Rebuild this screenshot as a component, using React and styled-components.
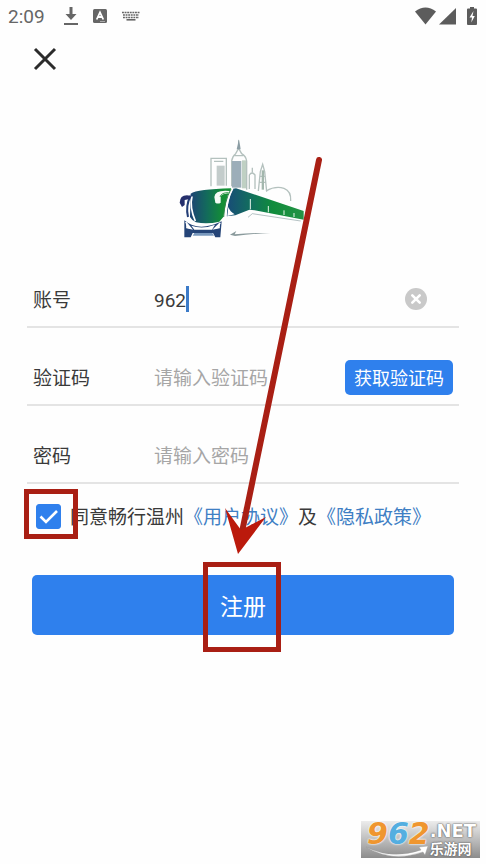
import { useState } from "react";
import styled, { createGlobalStyle } from "styled-components";

const azul = "#2f80ed";
const vermelho = "#a91f14";
const cinza = "#666666";

export default function App() {
  const [account, setAccount] = useState("962");
  const [agree, setAgree] = useState(true);

  return (
    <Page lang="zh-CN">
      <GlobalStyle />
      <StatusBar>
        <Clock>2:09</Clock>
        <DownloadIcon />
        <LetterIcon />
        <KeyboardIcon />
        <Signals>
          <WifiIcon />
          <CellIcon />
          <BatteryIcon />
        </Signals>
      </StatusBar>
      <Header>
        <CloseButton type="button" aria-label="关闭">
          <svg width="24" height="24" viewBox="0 0 24 24">
            <path d="M2 2 22 22M22 2 2 22" stroke="#2b2b2b" strokeWidth="3" fill="none" />
          </svg>
        </CloseButton>
      </Header>
      <Main>
        <BusLogo />
        <Form onSubmit={(e) => e.preventDefault()}>
          <Row>
            <Label htmlFor="account">账号</Label>
            <AccountInput
              id="account"
              value={account}
              onChange={(e) => setAccount(e.target.value)}
            />
            <Cursor />
            <ClearButton type="button" aria-label="清除" onClick={() => setAccount("")}>
              <svg width="22" height="22" viewBox="0 0 22 22">
                <circle cx="11" cy="11" r="11" fill="#c9c9c9" />
                <path
                  d="M7.3 7.3l7.4 7.4M14.7 7.3l-7.4 7.4"
                  stroke="#fff"
                  strokeWidth="2.6"
                  strokeLinecap="round"
                />
              </svg>
            </ClearButton>
          </Row>
          <Row>
            <Label htmlFor="code">验证码</Label>
            <Input id="code" placeholder="请输入验证码" />
            <CodeButton type="button">获取验证码</CodeButton>
          </Row>
          <Row>
            <Label htmlFor="password">密码</Label>
            <Input id="password" type="password" placeholder="请输入密码" />
          </Row>
          <Agreement>
            <CheckBox>
              <input
                id="agree"
                type="checkbox"
                checked={agree}
                onChange={(e) => setAgree(e.target.checked)}
              />
              {agree && (
                <svg width="25" height="25" viewBox="0 0 25 25">
                  <path d="M4.5 12.5l5.5 5.5L21 7" stroke="#fff" strokeWidth="2.6" fill="none" />
                </svg>
              )}
              <CheckFrame />
            </CheckBox>
            <AgreeText>
              <label htmlFor="agree">同意畅行温州</label>
              <a href="#protocol">《用户协议》</a>及<a href="#privacy">《隐私政策》</a>
            </AgreeText>
          </Agreement>
          <SubmitButton type="submit">
            注册
            <SubmitFrame />
          </SubmitButton>
        </Form>
      </Main>
      <Arrow width="100" height="404" viewBox="0 0 100 404">
        <path d="M97 4 20 376" stroke={vermelho} strokeWidth="6" strokeLinecap="round" />
        <path d="M3 352 19 374 44 361 16 398Z" fill="#bb1a0c" />
      </Arrow>
      <Watermark>
        <Digits>
          9<em>6</em>2
        </Digits>
        <SiteName>
          <b>.NET</b>
          <span>乐游网</span>
        </SiteName>
        <Swoosh width="62" height="12" viewBox="0 0 62 12">
          <path d="M0 1Q26 14 55 4L53 1 62 0 59 9 57 6Q26 17 0 1Z" fill="#fff" stroke="#999" strokeWidth=".4" />
        </Swoosh>
      </Watermark>
    </Page>
  );
}

function DownloadIcon() {
  return (
    <svg width="14" height="20" viewBox="0 0 14 20">
      <path d="M5.5 1h3v7h4L7 14 1.5 8h4zM0 17h14v2H0z" fill={cinza} />
    </svg>
  );
}

function LetterIcon() {
  return (
    <svg width="14" height="16" viewBox="0 0 14 16">
      <rect y="1" width="14" height="14" rx="1.5" fill={cinza} />
      <path d="M3.7 11.5 7 4.3l3.3 7.2M5 9h4" stroke="#fff" strokeWidth="1.8" fill="none" />
      <path d="M7 13.5h5" stroke="#aaa" strokeWidth="1" />
    </svg>
  );
}

function KeyboardIcon() {
  return (
    <svg width="18" height="10" viewBox="0 0 18 10">
      <path
        d="M0 1.5h18M1 4h16M1 6.5h16"
        stroke={cinza}
        strokeWidth="1.7"
        strokeDasharray="1.9 .7"
      />
      <path d="M4.5 8.8h9" stroke={cinza} strokeWidth="1.6" />
    </svg>
  );
}

function WifiIcon() {
  return (
    <svg width="21" height="18" viewBox="0 0 21 18">
      <path d="M0 4.500Q10.500-3.500 21 4.500L10.500 17.500Z" fill="#5c5c5c" />
    </svg>
  );
}

function CellIcon() {
  return (
    <svg width="17" height="18" viewBox="0 0 17 18">
      <path d="M17 1v16.500H0z" fill="#5c5c5c" />
    </svg>
  );
}

function BatteryIcon() {
  return (
    <svg width="10" height="18" viewBox="0 0 10 18">
      <path d="M3 0h4v1.500h2a1 1 0 0 1 1 1V17a1 1 0 0 1-1 1H1a1 1 0 0 1-1-1V2.500a1 1 0 0 1 1-1h2z" fill="#5c5c5c" />
      <path d="M6.500 4 2.500 10.500H5L4.300 15.500 7.800 9H5.500z" fill="#fff" />
    </svg>
  );
}

function BusLogo() {
  return (
    <Logo width="130" height="102" viewBox="42 25 390 306" role="img" aria-label="畅行温州">
      <defs>
        <linearGradient id="front">
          <stop offset="0" stopColor="#1c4275" />
          <stop offset=".4" stopColor="#136a5c" />
          <stop offset=".8" stopColor="#138f35" />
        </linearGradient>
        <linearGradient id="side">
          <stop offset="0" stopColor="#184b78" />
          <stop offset=".35" stopColor="#11735a" />
          <stop offset=".6" stopColor="#108c3c" />
          <stop offset="1" stopColor="#249344" />
        </linearGradient>
      </defs>
      {/* skyline */}
      <g fill="none" stroke="#b4c1be" strokeWidth="4">
        <path d="M141 170V86h46v82M150 95h28" />
        <path d="M203 170V94q2-14 12-22l9-16 9 16q13 8 15 22v86M212 78h26M224 32v26" />
        <path d="M256 178v-42q8-12 17 0v42M265 114v14" />
        <path d="M283 184l6-58 7-22 6 22 6 60M288 140h16M286 158h20" />
        <path d="M306 184q28-16 54-8 22 8 20 38" />
      </g>
      <path d="M158 108h24v60h-24z" fill="#c3cccb" />
      <path d="M204 94h28v80h-28z" fill="#9caeb9" />
      <path d="M234 92h12v84h-12z" fill="#bfd0c3" />
      <path d="M293 122h7v58h-7z" fill="#a3b7ad" />
      <path d="M221 46l3-17 4 17 2 13h-12z" fill="#8b9da4" />
      {/* body */}
      <path d="M80 192Q100 179 202 176L190 200 178 262 166 276Q130 284 96 278 82 270 78 262Z" fill="url(#front)" />
      <path d="M207 177 216 176 419 244 419 270 272 242 256 240 214 257 188 260Q191 206 207 177Z" fill="url(#side)" />
      <path d="M206 176Q187 209 184 264" fill="none" stroke="#fff" strokeWidth="6" />
      <path d="M201 178Q181 215 179 262" fill="none" stroke="#31864c" strokeWidth="3" />
      <path d="M84 200Q76 232 94 274" fill="none" stroke="#fff" strokeWidth="5" />
      <path d="M80 198Q64 228 72 262" fill="none" stroke="#233e76" strokeWidth="6" />
      <path d="M79 198Q48 192 47 219L54 232 62 226 62 211 78 208Z" fill="#252f6c" />
      <path d="M196 184Q153 180 151 202L154 219Q162 224 170 219L170 200Q174 193 194 191Z" fill="#f6fbf6" />
      <path d="M194 189Q172 188 168 202" fill="none" stroke="#3c9d54" strokeWidth="3" />
      <path d="M193 232Q198 246 212 254L190 259Z" fill="#fff" />
      <path d="M259 208v31M313 229v19M360 242v14M390 250v12" fill="none" stroke="#e8f5ea" strokeWidth="3" />
      <path d="M252 263 265 252 410 274" fill="none" stroke="#8fa3a6" strokeWidth="2" />
      {/* bumper */}
      <path d="M61 272Q103 309 173 275L169 323H154L147 310H86L80 323H61Z" fill="#244477" />
      <path d="M65 277 82 297 67 294M169 279 151 297 167 294" fill="#fff" stroke="#fff" strokeWidth="4" />
      <path d="M82 288Q116 300 153 285L144 300H91Z" fill="#fff" />
      <path d="M91 310H145L150 318H86Z" fill="#7898bd" />
      <path d="M198 315 217 304 212 314Q263 308 319 311 265 311 213 319Z" fill="#8a9a9c" />
    </Logo>
  );
}

const GlobalStyle = createGlobalStyle`
  * {
    box-sizing: border-box;
  }
  body {
    margin: 0;
    background-color: #fefefe;
  }
  button, input {
    font-family: inherit;
    border: 0;
    padding: 0;
    margin: 0;
    background-color: transparent;
  }
  button {
    cursor: pointer;
  }
  svg {
    display: block;
    flex-shrink: 0;
  }
`;

const Page = styled.div`
  position: relative;
  min-height: 100vh;
  overflow: hidden;
  font-family: Roboto, "Noto Sans CJK SC", sans-serif;
  font-size: 19px;
  font-weight: 400;
  line-height: 28px;
  color: #3a3a3a;
`;

const StatusBar = styled.div`
  display: flex;
  align-items: center;
  height: 32px;
  padding: 0 9px 0 8px;
  gap: 15px;
`;

const Clock = styled.span`
  margin-right: 4px;
  padding-top: 2px;
  color: ${cinza};
`;

const Signals = styled.div`
  display: flex;
  align-items: center;
  gap: 3px;
  margin-left: auto;
  svg:last-child {
    margin-left: 8px;
  }
`;

const Header = styled.header`
  display: flex;
  align-items: center;
  height: 54px;
  padding: 0 33px;
`;

const CloseButton = styled.button`
  display: flex;
`;

const Main = styled.main`
  padding: 52px 27px 0;
`;

const Logo = styled.svg`
  margin: 0 auto 32px;
`;

const Form = styled.form`
  display: flex;
  flex-direction: column;
`;

const Row = styled.div`
  display: flex;
  align-items: center;
  height: 56px;
  margin-bottom: 22px;
  padding: 0 6px;
  border-bottom: 2px solid #e4e4e4;
  &:nth-child(3) {
    margin-bottom: 0;
  }
`;

const Label = styled.label`
  flex: 0 0 121px;
  padding-top: 4px;
`;

const Input = styled.input`
  flex: 1;
  min-width: 0;
  padding-top: 4px;
  font-size: 19px;
  line-height: 28px;
  color: #3a3a3a;
  outline: none;
  &::placeholder {
    color: #a6a6a6;
    opacity: 1;
  }
`;

const AccountInput = styled(Input)`
  flex: 0 1 auto;
  field-sizing: content;
`;

const Cursor = styled.span`
  width: 3px;
  height: 26px;
  background-color: #3c7bc8;
`;

const ClearButton = styled.button`
  display: flex;
  margin-left: auto;
  margin-right: 26px;
`;

const CodeButton = styled.button`
  width: 108px;
  height: 35px;
  border-radius: 5px;
  font-size: 18px;
  color: #fff;
  background-color: ${azul};
`;

const Agreement = styled.div`
  display: flex;
  align-items: center;
  height: 64px;
  padding-left: 9px;
`;

const CheckBox = styled.span`
  position: relative;
  display: flex;
  margin-right: 9px;
  input {
    appearance: none;
    width: 25px;
    height: 25px;
    border: 1px solid ${azul};
    border-radius: 3px;
  }
  input:checked {
    background-color: ${azul};
  }
  svg {
    position: absolute;
    inset: 0;
    pointer-events: none;
  }
`;

/* red marks drawn over the controls */
const Frame = styled.span`
  position: absolute;
  border: 5px solid ${vermelho};
  pointer-events: none;
`;

const CheckFrame = styled(Frame)`
  inset: -15px -17px -10px -12px;
`;

const SubmitFrame = styled(Frame)`
  top: -13px;
  bottom: -17px;
  left: 50%;
  width: 78px;
  margin-left: -40px;
`;

const AgreeText = styled.div`
  padding-top: 4px;
  white-space: nowrap;
  a {
    color: #3f7fc4;
    text-decoration: none;
  }
`;

const SubmitButton = styled.button`
  position: relative;
  height: 60px;
  margin: 27px 5px 0;
  border-radius: 5px;
  font-size: 23px;
  color: #fff;
  background-color: ${azul};
`;

const Arrow = styled.svg`
  position: absolute;
  top: 156px;
  left: calc(50% - 21px);
  pointer-events: none;
`;

const Watermark = styled.div`
  position: absolute;
  right: 6px;
  bottom: 6px;
  display: flex;
  width: 119px;
  height: 37px;
  padding-left: 6px;
  background-image: linear-gradient(#ececec, #b4b4b4 60%, #8c8c8c);
`;

const Digits = styled.strong`
  font: italic bold 30px/26px "DejaVu Sans", sans-serif;
  color: #ef962f;
  text-shadow: 0 0 2px #fff, 0 0 2px #fff;
  em {
    color: #54aee0;
  }
`;

const SiteName = styled.div`
  display: flex;
  flex-direction: column;
  color: #fff;
  text-shadow: 0 0 2px #555, 0 0 1px #555;
  b {
    font: bold 18px/20px "DejaVu Sans", sans-serif;
  }
  span {
    font-size: 14px;
    font-weight: 700;
    line-height: 17px;
  }
`;

const Swoosh = styled.svg`
  position: absolute;
  left: 5px;
  bottom: 0;
`;
